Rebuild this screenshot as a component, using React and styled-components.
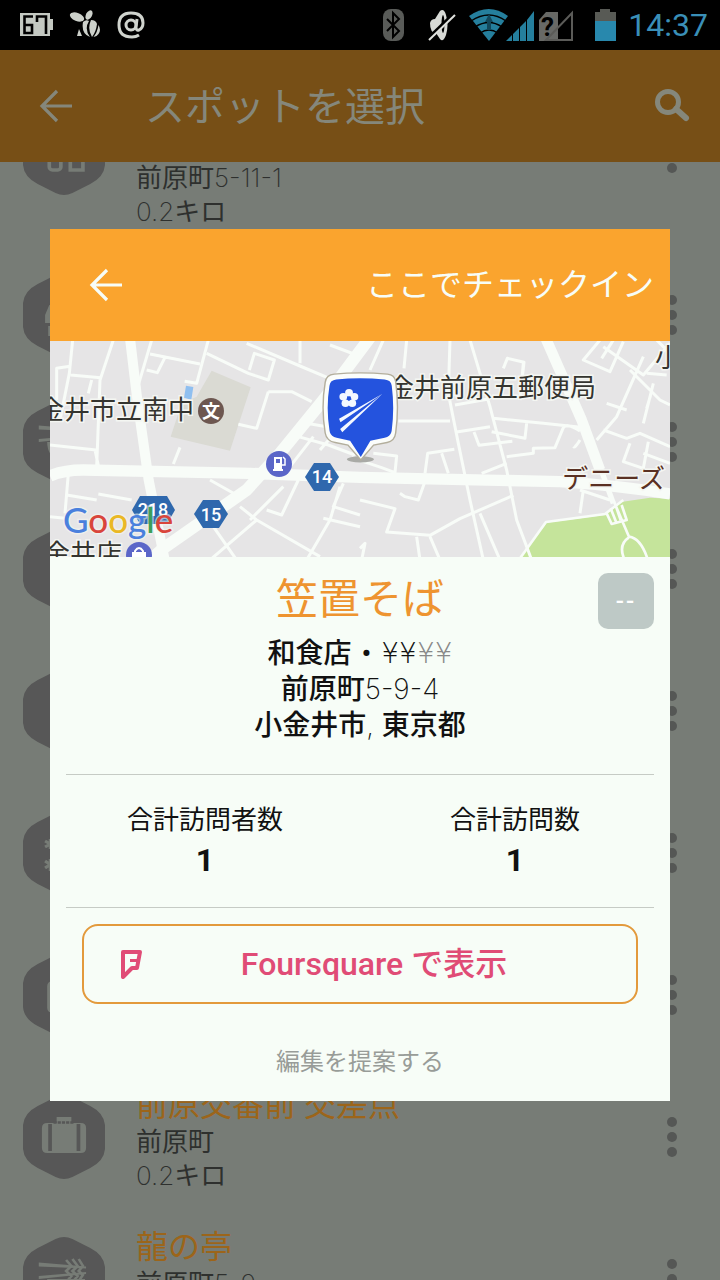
import React, {useEffect, useRef} from 'react'
import styled, {createGlobalStyle} from 'styled-components'

const places = [
    {icon: 'shop', address: '前原町', number: '5-11-1', distance: '0.2', height: 182},
    {icon: 'store'},
    {icon: 'noodle', height: 112},
    {},
    {},
    {icon: 'sparkle'},
    {icon: 'cup'},
    {icon: 'bag', name: '前原交番前 交差点', address: '前原町', distance: '0.2'},
    {icon: 'noodle', name: '龍の亭', address: '前原町', number: '5-9', distance: '0.2'}
]

const glyphs = {
    shop: <g fill="none" stroke="#777c76" strokeWidth="3.500">
        <rect x="26" y="40" width="11" height="19" rx="3"/>
        <path d="M46 40v19h12V40l-4 8q-2 2-4 0z"/>
    </g>,
    store: <g fill="#777c76">
        <path d="M26 32h28l6 10v8H22v-8z"/>
        <path d="M25 53h32v10H25z"/>
    </g>,
    noodle: <g fill="#777c76">
        <path d="M16 25.500l45 4v2l-45-2zM16 39l45-4v2l-45 5z"/>
        <path d="M24 42h36q0 14-12 20H36q-12-6-12-20z"/>
        <path d="M42 23l5 6-5 5 5 5-4 5M48 22l5 7-5 5 5 5-4 5M54 22l4 7-4 5 4 4-4 6" fill="none" stroke="#777c76" strokeWidth="2.500"/>
    </g>,
    sparkle: <g stroke="#777c76" strokeWidth="3">
        <path d="M27 28v10M22 30l10 6M32 30l-10 6M27 48v12M22 50l10 7M32 50l-10 7M50 34v16M42 38l16 8M58 38l-16 8"/>
    </g>,
    cup: <rect x="24" y="28" width="32" height="32" rx="5" fill="#777c76"/>,
    bag: <g>
        <path d="M33 22h14v6H33z" fill="#777c76"/>
        <path d="M24 28h32q5 0 5 5v20q0 5-5 5H24q-5 0-5-5V33q0-5 5-5z" fill="#777c76"/>
        <path d="M25 29h3.500v27H25zM52 29h3.500v27H52z" fill="#575757"/>
        <path d="M30 27.500h20" stroke="#575757" strokeWidth="2.500" strokeDasharray="3 1"/>
    </g>
}

function CategoryIcon({name}) {
    return (
        <svg width="82" height="84" viewBox="1 0 78 84" preserveAspectRatio="none" aria-hidden="true">
            <path fill="#575757" d="M40 0q4 0 8 2l17 9q13 7 14 19 1 12 0 24-1 12-14 19L48 82q-8 4-16 0L15 73Q2 66 1 54 0 42 1 30 2 18 15 11L32 2q4-2 8-2z"/>
            {glyphs[name]}
        </svg>
    )
}

function BackArrow() {
    return (
        <svg width="34" height="34" viewBox="0 0 34 34" fill="none" stroke="currentColor" strokeWidth="3.200" aria-hidden="true">
            <path d="M18 2L3 17l15 15M3 17h30"/>
        </svg>
    )
}

function StatusIcons() {
    return (
        <>
            <StatusGroup $gap={16}>
                <svg width="33" height="24" viewBox="0 0 33 24">
                    <path fill="#c4c9c2" d="M0 0h30v6h3v11h-3v6H0z"/>
                    <path fill="none" stroke="#000" strokeWidth="2.600" d="M13 3.500H4.500v16.500H12v-8H5M17 9V3.500h9V21"/>
                </svg>
                <svg width="32" height="30" viewBox="0 0 32 30" fill="#cdd1cb">
                    <ellipse cx="8" cy="7" rx="7.500" ry="4" transform="rotate(22 8 7)"/>
                    <ellipse cx="20" cy="5" rx="3" ry="5" transform="rotate(28 20 5)"/>
                    <path d="M14 12q3-3 6-1-5 8 1 16-9-3-7-15zM22 10q5 0 6 4-1 8-5 13-5-8-1-17zM29.500 15q3 5 0 9-2 3-5 3 4-5 5-12zM10 19l3 7H8z"/>
                </svg>
                <svg width="30" height="30" viewBox="0 0 30 30" fill="none" stroke="#d0d4ce" strokeWidth="3">
                    <circle cx="14" cy="15" r="5"/>
                    <path d="M20 9l-1 8q0 4 3 3 4-2 4-7 0-10-12-10T2 15q0 12 13 12 4 0 7-2"/>
                </svg>
            </StatusGroup>
            <StatusGroup $gap={0}>
                <svg width="192" height="34" viewBox="0 0 192 34">
                    <rect x="0" y="1" width="21" height="32" rx="8" fill="#595b58"/>
                    <path d="M4 11l12 12-6 6V5l6 6L4 23" fill="none" stroke="#000" strokeWidth="2"/>
                    <path fill="#d8dad6" d="M47 15q1-4 5-4l5-8q4-3 6 4 3 10 0 20-3 8-6 4l-4-6q-6 0-6-10z"/>
                    <ellipse cx="60" cy="16" rx="1.500" ry="9" fill="#000"/>
                    <path d="M44 32L72 5" stroke="#000" strokeWidth="4"/>
                    <path d="M46 32L72 7" stroke="#e0e2de" strokeWidth="2"/>
                    <path fill="#257f9d" d="M86 8q20-14 39 0l-19 25z"/>
                    <path d="M88 13q18-12 35 0M92 19q14-9 27 0M97 25q9-6 18 0" fill="none" stroke="#000" strokeWidth="1.500"/>
                    <path d="M106 6l4 8h-2v8h-4v-8h-2z" fill="#12485c"/>
                    <path fill="#257f9d" d="M123 33l6-6v6zM130 26l6-6v13h-6zM137 19l6-6v20h-6zM144 12l7-9v30h-7z"/>
                    <path fill="#686966" d="M156 12l7-8h12v29h-19z"/>
                    <text x="158" y="28" fontFamily="Roboto, sans-serif" fontWeight="700" fontSize="26" fill="#000">?</text>
                    <path d="M163 32L189 5v27z" fill="none" stroke="#5b5b58" strokeWidth="2"/>
                </svg>
                <BatteryIcon width="21" height="32" viewBox="0 0 21 32">
                    <path fill="#585a55" d="M5 0h10v3h6v10H0V3h5z"/>
                    <path fill="#2888ad" d="M0 12h21v20H0z"/>
                </BatteryIcon>
                <Clock>14:37</Clock>
            </StatusGroup>
        </>
    )
}

// major and minor roads are drawn on a 1860 x 651 grid, then scaled down to the map
function MapView() {
    return (
        <MapSvg viewBox="0 0 620 216" preserveAspectRatio="xMidYMid slice" role="img" aria-label="Map">
            <rect width="620" height="216" fill="#e6e5e6"/>
            <g transform="translate(0 -1) scale(.33333)" fill="none" stroke="#f8fcf8" strokeLinejoin="round">
                <path fill="#dadad3" stroke="none" d="M485 92L602 142 540 332 362 290 395 190 440 170z"/>
                <path fill="#8fbff0" stroke="none" d="M408 137l22 4-6 38-22-6z"/>
                <path fill="#c5e49b" stroke="none" d="M1405 660L1490 548 1665 525 1708 487 1800 473 1860 476V660z"/>
                <g strokeWidth="34">
                    <path d="M0 408q40-18 100-18l500 10 330 12 600 13q180 12 330 37"/>
                    <path d="M962-10L820 180 690 340 590 450 340 625 290 670" strokeWidth="36"/>
                    <path d="M240-5L262 180 296 420 345 665" strokeWidth="30"/>
                    <path d="M1485-10L1595 240 1650 390" strokeWidth="32"/>
                    <path d="M1650 380L1690 490" strokeWidth="16"/>
                </g>
                <g strokeWidth="9">
                    <path d="M68 0L58 100 30 240M20 180V85l40-6M62 105l90 8M190 0L150 120 140 380M125 120l-10 40M0 315l145 16M135 330l15 70M55 400L45 520M50 465l90 15M145 462l100 18M0 530l45 5"/>
                    <path d="M305 0L262 145M300 42l150 30M345 52L322 98l-32-8M475 0L440 130l-36-6M470 40l125 60 60 20 18-60-60-20-15 50M590 10l160 68 90 38M750 70V0M840 15l80 30M655 155l70 0 60 30M655 155l-35 110-55-12M390 322l-20 50"/>
                    <path d="M480 420l80 45M570 500l50 40 190 110M700 440l-60 60-40 40M490 560l70 100M745 420l-50 105-45-15M790 290L720 380M745 290l90 25 80 30M870 440L840 540 770 660M880 430L850 500l80 25M820 535l110 25M620 540l-140 120M870 260l-60 70M770 250l60 10"/>
                    <path d="M1000 0l-40 90M1070 0l-8 85M1200 0l-5 160 30 150L1260 480l40 180M1260 0l60 200 50 190 30 150 45 120M1045 243h155M1215 195l100-18M1220 276l100-16M1272 276l15 40 100-12M1360 85l12-30 50 12-5 45M1420 70l-10 110M1330 235l150 15 140 15M1430 250l-5 45-100-20M1370 350l80-10 0-15 65-2 25-60q10-15 50 10"/>
                    <path d="M970 340l70 8-5 50-40-15-90-30M1125 400l8-60 80-12M1175 340l20 60M1050 460l15 10 40 10 25-70M930 480l105 26-25 70 130 10 90-50 160-70M1100 590l10 70M1140 590l30 70M1295 400l75-30M1290 520l60 140M930 625l15-15-10 50"/>
                    <path d="M1650 0l-50 60 80 35 40-90M1690 0l-35 55M1660 20L1780 105 1860 10M1780 50l-80 180-60 70M1670 190l60 20M1660 270l70 25 40-15 90 40M1740 90l90 90 30 15M1810 130l-30 120M1790 205l12-40M1740 310l-20 55 60 20 15-80M1780 340l80 30M1590 300q-15 25-20 20M1600 450l-10 70M1590 450l90 30M1820 0l40 40M1790 100l60 5"/>
                    <path d="M1410 655L1488 546 1665 522 1720 480" strokeWidth="8"/>
                    <path d="M1692 485l45 105q35 5 55 65M1736 593q-30 20-15 60M1670 520l15 32 45-12-15-45M1682 505l16 40M1698 500l14 40" strokeWidth="8"/>
                </g>
            </g>

            <g fontFamily='"Noto Sans CJK JP", sans-serif' fontSize="26" fill="#34342f" stroke="#f4f6f2" strokeWidth="3" paintOrder="stroke">
                <text x="144" y="78" textAnchor="end">金井市立南中</text>
                <text x="546" y="56" textAnchor="end">金井前原五郵便局</text>
                <text x="615" y="147" textAnchor="end" fill="#5a3023">デニーズ</text>
                <text x="605" y="26">小</text>
                <text x="72" y="222" textAnchor="end">金井店</text>
            </g>

            <circle cx="161" cy="70" r="13" fill="#6d5750"/>
            <text x="161" y="77" textAnchor="middle" fontFamily='"Noto Sans CJK JP", sans-serif' fontWeight="700" fontSize="18" fill="#fff">文</text>
            <circle cx="229" cy="123" r="13" fill="#5b66c8"/>
            <path fill="#fff" fillRule="evenodd" d="M224 116h8v12h1v2h-10v-2h1zM226 118v4h4v-4z"/>
            <path d="M232 124h3v-6l-2-2M235 118v4" fill="none" stroke="#fff" strokeWidth="1.500"/>
            <circle cx="89" cy="214" r="13" fill="#5b66c8"/>
            <path d="M85 212v-2q4-6 8 0v2" fill="none" stroke="#fff" strokeWidth="2"/>
            <path fill="#fff" d="M82 211h14v8H82z"/>

            <g fill="#2f68ad">
                <path d="M264 122h16l9 14-9 14h-16l-9-14z"/>
                <path d="M153 159h16l9 14-9 14h-16l-9-14z"/>
                <path d="M90 155h27l8 14-8 14H90l-8-14z"/>
            </g>
            <g fontFamily="Roboto, sans-serif" fontWeight="500" fontSize="18" fill="#fff" textAnchor="middle">
                <text x="272" y="142">14</text>
                <text x="161" y="180">15</text>
                <text x="103" y="175">218</text>
            </g>
            <text x="13" y="192" fontFamily="Lato, sans-serif" fontWeight="500" fontSize="35" stroke="#f4f6f2" strokeOpacity=".6" strokeWidth="3" paintOrder="stroke">
                <tspan fill="#4a80dd">G</tspan>
                <tspan fill="#d9453c">o</tspan>
                <tspan fill="#eab825">o</tspan>
                <tspan fill="#4a80dd">g</tspan>
                <tspan fill="#3c9f58">l</tspan>
                <tspan fill="#d9453c">e</tspan>
            </text>

            <g transform="translate(267 19) scale(.356 .338)">
                <ellipse cx="122" cy="294" rx="38" ry="9" fill="#a9aaa6"/>
                <path fill="#fbfdfb" stroke="#b3ae9c" strokeWidth="4" d="M48 42q72-8 150 0 20 2 23 22 10 75 0 152-3 24-24 28l-38 8-36 44-36-44-36-8q-24-4-28-28-12-76 0-150 3-22 25-24z"/>
                <path fill="#2453de" d="M54 58q66-8 136 0 18 2 20 18 8 66 0 132-2 18-20 22l-40 9-27 48-30-48-38-9q-18-4-20-22-10-66 0-132 2-16 19-18z"/>
                <g fill="#f4f8ff">
                    <circle cx="90" cy="97" r="11"/>
                    <circle cx="105" cy="109" r="11"/>
                    <circle cx="99" cy="128" r="11"/>
                    <circle cx="80" cy="128" r="11"/>
                    <circle cx="74" cy="109" r="11"/>
                    <circle cx="90" cy="114" r="6" fill="#2453de"/>
                    <path d="M62 174L184 100 66 184zM65 204L184 100 71 214z"/>
                </g>
            </g>
        </MapSvg>
    )
}

function PlaceRow({place}) {
    return (
        <Row $height={place.height}>
            <CategoryIcon name={place.icon}/>
            <RowText>
                {place.name && <h2>{place.name}</h2>}
                {place.address && <p>{place.address}<Thin>{place.number}</Thin></p>}
                {place.distance && <p><Thin>{place.distance}</Thin>キロ</p>}
            </RowText>
            <MoreButton type="button" aria-label="その他">
                <i/><i/><i/>
            </MoreButton>
        </Row>
    )
}

export default function App() {
    const listRef = useRef(null)

    useEffect(() => {
        listRef.current.scrollTop = 100
    }, [])

    return (
        <Screen>
            <GlobalStyle/>
            <StatusBar>
                <StatusIcons/>
            </StatusBar>
            <AppBar>
                <IconButton type="button" aria-label="戻る"><BackArrow/></IconButton>
                <h1>スポットを選択</h1>
                <IconButton type="button" aria-label="検索">
                    <svg width="36" height="34" viewBox="0 0 36 34" fill="none" stroke="currentColor" aria-hidden="true">
                        <circle cx="14" cy="13" r="10.500" strokeWidth="5"/>
                        <path d="M22 20l10 9" strokeWidth="6" strokeLinecap="round"/>
                    </svg>
                </IconButton>
            </AppBar>
            <List ref={listRef}>
                {places.map((place, i) => <PlaceRow key={i} place={place}/>)}
            </List>

            <Overlay>
                <Dialog role="dialog" aria-label="笠置そば">
                    <DialogHeader>
                        <IconButton type="button" aria-label="戻る"><BackArrow/></IconButton>
                        <CheckIn type="button">ここでチェックイン</CheckIn>
                    </DialogHeader>
                    <MapView/>
                    <Info>
                        <h2>笠置そば</h2>
                        <p>和食店<Bullet>•</Bullet><Price>¥¥<Muted>¥¥</Muted></Price></p>
                        <p>前原町<Thin>5-9-4</Thin></p>
                        <p>小金井市<Thin>, </Thin>東京都</p>
                        <Rating>--</Rating>
                    </Info>
                    <Divider/>
                    <Stats>
                        <div><dt>合計訪問者数</dt><dd>1</dd></div>
                        <div><dt>合計訪問数</dt><dd>1</dd></div>
                    </Stats>
                    <Divider/>
                    <FoursquareButton type="button">
                        <svg width="24" height="30" viewBox="0 0 24 30" fill="none" stroke="currentColor" strokeWidth="4" strokeLinejoin="round" aria-hidden="true">
                            <path d="M3 3h17l-3 16h-5l-9 9z"/>
                            <path d="M10 11.500h8" strokeWidth="3"/>
                        </svg>
                        <span>Foursquare で表示</span>
                    </FoursquareButton>
                    <SuggestLink href="#edit">編集を提案する</SuggestLink>
                </Dialog>
            </Overlay>
        </Screen>
    )
}

const GlobalStyle = createGlobalStyle`
    * {
        box-sizing: border-box;
    }

    body, h1, h2, p, dl, dd {
        margin: 0;
    }

    body {
        background: #777c76;
        font-family: Roboto, "Noto Sans CJK JP", sans-serif;
    }

    button {
        padding: 0;
        border: 0;
        background: none;
        color: inherit;
        font: inherit;
        cursor: pointer;
    }
`

const Screen = styled.div`
    display: flex;
    flex-direction: column;
    height: 100vh;
`

const StatusBar = styled.div`
    flex: none;
    display: flex;
    justify-content: space-between;
    align-items: center;
    height: 50px;
    padding: 0 12px 0 20px;
    background: #000;
`

const StatusGroup = styled.div`
    display: flex;
    align-items: center;
    gap: ${props => props.$gap}px;
`

const BatteryIcon = styled.svg`
    margin: 0 12px 0 20px;
`

const Clock = styled.span`
    color: #3a8fb7;
    font-size: 32px;
    line-height: 50px;
`

const AppBar = styled.header`
    flex: none;
    display: flex;
    align-items: center;
    height: 112px;
    padding: 0 30px 0 39px;
    background: #774f16;
    color: #85877b;

    h1 {
        flex: 1;
        margin-left: 72px;
        padding-top: 4px;
        font-size: 40px;
        font-weight: 400;
        line-height: 56px;
    }
`

const IconButton = styled.button`
    display: flex;
`

const List = styled.ul`
    flex: 1;
    min-height: 0;
    margin: 0;
    padding: 0;
    overflow: hidden;
    list-style: none;
    background: #777c76;
`

const Row = styled.li`
    display: flex;
    align-items: center;
    gap: 31px;
    height: ${props => props.$height || 142}px;
    padding: 0 43px 0 23px;
`

const RowText = styled.div`
    flex: 1;
    align-self: flex-end;
    padding-bottom: 15px;
    color: #2e302e;
    font-size: 26px;
    line-height: 34px;

    h2 {
        color: #9c651a;
        font-size: 32px;
        font-weight: 400;
        line-height: 40px;
    }
`

const Thin = styled.span`
    font-family: Inter, sans-serif;
    font-weight: 200;
    line-height: 1;
`

const Price = styled(Thin)`
    font-family: "DejaVu Sans", "DejaVu Sans Light", sans-serif;
`

const Muted = styled.span`
    color: #888;
`

const Bullet = styled.span`
    padding: 0 10px;
`

const MoreButton = styled.button`
    display: flex;
    flex-direction: column;
    gap: 5px;

    i {
        width: 10px;
        height: 10px;
        border-radius: 50%;
        background: #555755;
    }
`

const Overlay = styled.div`
    position: fixed;
    inset: 50px 0 0;
    display: flex;
    align-items: center;
    padding: 0 50px;
`

const Dialog = styled.section`
    flex: 1;
    min-width: 0;
    background: #f7fdf7;
    color: #111;
`

const DialogHeader = styled.header`
    display: flex;
    justify-content: space-between;
    align-items: center;
    height: 112px;
    padding: 0 16px 0 39px;
    background: #faa42e;
    color: #f7fdf7;
`

const CheckIn = styled.button`
    font-size: 32px;
    line-height: 48px;
`

const MapSvg = styled.svg`
    display: block;
    width: 100%;
    height: 216px;
`

const Info = styled.div`
    position: relative;
    padding: 15px 16px 30px;
    text-align: center;
    font-size: 28px;
    font-weight: 500;
    line-height: 36px;

    h2 {
        margin-bottom: 8px;
        color: #ee9430;
        font-size: 42px;
        font-weight: 400;
        line-height: 56px;
    }
`

const Rating = styled.span`
    position: absolute;
    top: 16px;
    right: 16px;
    width: 56px;
    border-radius: 10px;
    background: #bec9c6;
    color: #fff;
    font-size: 24px;
    letter-spacing: 2px;
    line-height: 56px;
`

const Divider = styled.hr`
    height: 1px;
    margin: 0 16px;
    border: 0;
    background: #c6cbc5;
`

const Stats = styled.dl`
    display: grid;
    grid-template-columns: 1fr 1fr;
    padding: 25px 0 27px;
    text-align: center;
    line-height: 40px;

    dt {
        font-size: 26px;
    }

    dd {
        font-size: 32px;
        font-weight: 700;
    }
`

const FoursquareButton = styled.button`
    display: flex;
    align-items: center;
    width: calc(100% - 64px);
    height: 80px;
    margin: 16px 32px 0;
    padding: 0 32px 0 36px;
    border: 2px solid #e39a3c;
    border-radius: 16px;
    color: #e04c76;
    font-size: 32px;
    font-weight: 500;
    line-height: 40px;

    span {
        flex: 1;
    }
`

const SuggestLink = styled.a`
    display: block;
    padding: 38px 0 19px;
    color: #989c98;
    font-size: 24px;
    line-height: 40px;
    text-align: center;
    text-decoration: none;
`
